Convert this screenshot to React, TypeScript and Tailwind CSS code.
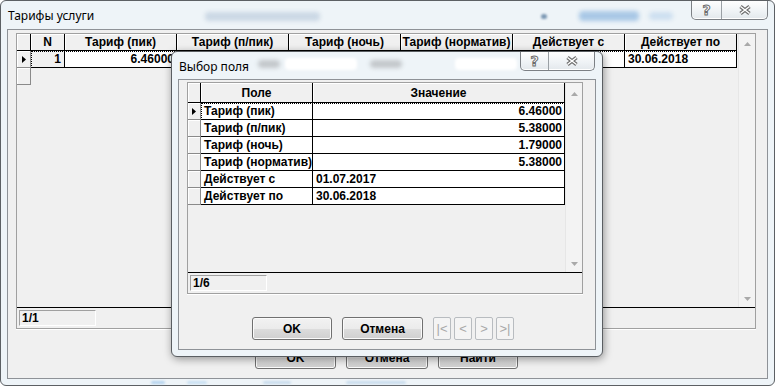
import React from "react";

const FONT = "font-['Liberation_Sans',Arial,sans-serif]";
const TFONT = "font-['Noto_Sans','Open_Sans',sans-serif]";

function Tri() {
  return (
    <svg width="4" height="7" viewBox="0 0 4 7">
      <polygon points="0,0 4,3.5 0,7" fill="#000" />
    </svg>
  );
}

function ArrowUp() {
  return (
    <svg width="7" height="4" viewBox="0 0 7 4">
      <polygon points="0,4 3.5,0 7,4" fill="#a9a9a9" />
    </svg>
  );
}

function ArrowDown() {
  return (
    <svg width="7" height="4" viewBox="0 0 7 4">
      <polygon points="0,0 7,0 3.5,4" fill="#a9a9a9" />
    </svg>
  );
}

function CaptionButtons({ qw, xw, h }: { qw: string; xw: string; h: string }) {
  return (
    <div className="flex self-start overflow-hidden rounded-b-[5px] border border-t-0 border-[#7c8085] bg-[linear-gradient(#fefefe,#eef2f5_60%,#e3e8ec)] shadow-[inset_0_-1px_0_#fff]">
      <div className={`flex items-center justify-center border-r border-[#9aa0a5] ${qw} ${h}`}>
        <span className="font-['DejaVu_Sans',sans-serif] text-[14px] font-bold leading-none text-white [-webkit-text-stroke:1px_#6d6d6d]">
          ?
        </span>
      </div>
      <div className={`flex items-center justify-center ${xw} ${h}`}>
        <svg width="14" height="10" viewBox="0 0 14 10">
          <path d="M2.5 1.5 L11.5 8.5 M11.5 1.5 L2.5 8.5" stroke="#6d6d6d" strokeWidth="3.6" fill="none" />
          <path d="M2.5 1.5 L11.5 8.5 M11.5 1.5 L2.5 8.5" stroke="#ffffff" strokeWidth="1.5" fill="none" />
        </svg>
      </div>
    </div>
  );
}

function WinButton({ children, w }: { children: React.ReactNode; w: string }) {
  return (
    <div
      className={`flex h-[23px] items-center justify-center rounded-[3px] border border-[#707070] bg-[linear-gradient(#f2f2f2_0%,#ebebeb_50%,#dddddd_51%,#cfcfcf_100%)] shadow-[inset_0_0_0_1px_#fbfbfb] text-[12px] font-bold text-black ${w}`}
    >
      {children}
    </div>
  );
}

function NavButton({ children }: { children: React.ReactNode }) {
  return (
    <div className="flex h-[23px] w-[18px] items-center justify-center rounded-[2px] border border-[#b8bcc0] bg-[#f4f4f4] text-[13px] text-[#a8a8a8]">
      {children}
    </div>
  );
}

function HeadCell({ w, children }: { w: string; children?: React.ReactNode }) {
  return (
    <div
      className={`flex h-full shrink-0 items-center justify-center border-b border-r border-black bg-[#f0f0f0] shadow-[inset_1px_1px_0_#fff] text-[12px] font-bold text-black whitespace-nowrap overflow-hidden ${w}`}
    >
      {children}
    </div>
  );
}

function IndCell({ children }: { children?: React.ReactNode }) {
  return (
    <div className="flex h-full w-full items-center justify-center border-b border-r border-[#8a8a8a] bg-[#f0f0f0] shadow-[inset_1px_1px_0_#fff]">
      {children}
    </div>
  );
}

const mainCols = [
  { t: "Тариф (пик)", v: "6.46000", r: true },
  { t: "Тариф (п/пик)", v: "5.38000", r: true },
  { t: "Тариф (ночь)", v: "1.79000", r: true },
  { t: "Тариф (норматив)", v: "5.38000", r: true },
  { t: "Действует с", v: "01.07.2017", r: false },
  { t: "Действует по", v: "30.06.2018", r: false },
];

const dlgRows = [
  { f: "Тариф (пик)", v: "6.46000", r: true },
  { f: "Тариф (п/пик)", v: "5.38000", r: true },
  { f: "Тариф (ночь)", v: "1.79000", r: true },
  { f: "Тариф (норматив)", v: "5.38000", r: true },
  { f: "Действует с", v: "01.07.2017", r: false },
  { f: "Действует по", v: "30.06.2018", r: false },
];

function MainGrid() {
  return (
    <div className="ml-[8px] mt-[3px] flex h-[296px] w-[740px] flex-col border border-[#a0a0a0] bg-[#f0f0f0] shadow-[0_1px_0_#fff]">
      <div className="flex min-h-0 flex-1">
        <div className="flex w-[721px] flex-col">
          <div className="flex h-[17px]">
            <HeadCell w="w-[14px]" />
            <HeadCell w="w-[34px]">N</HeadCell>
            {mainCols.map((c) => (
              <HeadCell key={c.t} w="w-[112px]">
                {c.t}
              </HeadCell>
            ))}
          </div>
          <div className="flex h-[17px]">
            <div className="h-full w-[14px] shrink-0">
              <IndCell>
                <Tri />
              </IndCell>
            </div>
            <div className="relative flex h-full">
              <div className="flex h-full w-[34px] items-center justify-end border-b border-r border-black bg-[#f0f0f0] pr-[3px] text-[12px] font-bold">
                1
              </div>
              {mainCols.map((c) => (
                <div
                  key={c.t}
                  className={`flex h-full w-[112px] items-center border-b border-r border-black bg-white text-[12px] font-bold ${c.r ? "justify-end pr-[2px]" : "justify-start pl-[3px]"}`}
                >
                  {c.v}
                </div>
              ))}
              <div className="pointer-events-none absolute inset-0 border border-dotted border-black" />
            </div>
          </div>
          <div className="h-[17px] w-[14px]">
            <IndCell />
          </div>
        </div>
        <div className="flex flex-1 flex-col items-center justify-between border-l border-[#e6e6e6] bg-[#f3f3f3] pb-[6px] pt-[8px]">
          <ArrowUp />
          <ArrowDown />
        </div>
      </div>
      <div className="flex h-[21px] items-start border-t border-black pl-[2px] pt-[2px]">
        <div className="flex h-[16px] w-[77px] items-center border border-b-white border-l-[#a0a0a0] border-r-white border-t-[#a0a0a0] pl-[2px] text-[12px] font-bold">
          1/1
        </div>
      </div>
    </div>
  );
}

function DialogGrid() {
  return (
    <div className="ml-[8px] mt-[2px] flex h-[212px] w-[396px] flex-col border border-[#a0a0a0] bg-[#f0f0f0] shadow-[0_1px_0_#fff]">
      <div className="flex min-h-0 flex-1">
        <div className="flex w-[377px] flex-col">
          <div className="flex h-[20px]">
            <HeadCell w="w-[13px]" />
            <HeadCell w="w-[112px]">Поле</HeadCell>
            <HeadCell w="w-[252px]">Значение</HeadCell>
          </div>
          {dlgRows.map((r, i) => (
            <div key={r.f} className="flex h-[17px]">
              <div className="h-full w-[13px] shrink-0">
                <IndCell>{i === 0 ? <Tri /> : null}</IndCell>
              </div>
              <div className="relative flex h-full">
                <div className="flex h-full w-[112px] items-center border-b border-r border-black bg-white pl-[3px] text-[12px] font-bold whitespace-nowrap overflow-hidden">
                  {r.f}
                </div>
                <div
                  className={`flex h-full w-[252px] items-center border-b border-r border-black bg-white text-[12px] font-bold ${r.r ? "justify-end pr-[2px]" : "justify-start pl-[3px]"}`}
                >
                  {r.v}
                </div>
                {i === 0 ? <div className="pointer-events-none absolute inset-0 border border-dotted border-black" /> : null}
              </div>
            </div>
          ))}
        </div>
        <div className="flex flex-1 flex-col items-center justify-between border-l border-[#e6e6e6] bg-[#f3f3f3] pb-[6px] pt-[9px]">
          <ArrowUp />
          <ArrowDown />
        </div>
      </div>
      <div className="flex h-[21px] items-start border-t border-black pl-[2px] pt-[2px]">
        <div className="flex h-[16px] w-[77px] items-center border border-b-white border-l-[#a0a0a0] border-r-white border-t-[#a0a0a0] pl-[2px] text-[12px] font-bold">
          1/6
        </div>
      </div>
    </div>
  );
}

function Dialog() {
  return (
    <div className="absolute left-[171px] top-[51px] flex h-[306px] w-[432px] flex-col rounded-[6px] border border-[#5a5e62] bg-[#eef4f8] shadow-[1px_2px_8px_rgba(0,0,0,0.4)]">
      <div className="relative flex h-[27px] items-center justify-between">
        <div className="pointer-events-none absolute left-[86px] top-[8px] h-[8px] w-[22px] rounded bg-[#c3c7cb] blur-[2px]" />
        <div className="pointer-events-none absolute left-[113px] top-[6px] h-[12px] w-[72px] rounded bg-white blur-[1.5px]" />
        <div className="pointer-events-none absolute left-[198px] top-[8px] h-[8px] w-[32px] rounded bg-[#c3c7cb] blur-[2px]" />
        <div className="pointer-events-none absolute left-[283px] top-[6px] h-[12px] w-[62px] rounded bg-white blur-[1.5px]" />
        <span className={`relative pl-[7px] pt-[2px] text-[12px] text-black ${TFONT}`}>Выбор поля</span>
        <div className="relative mr-[7px] self-start">
          <CaptionButtons qw="w-[28px]" xw="w-[45px]" h="h-[18px]" />
        </div>
      </div>
      <div className="mx-[6px] mb-[6px] flex flex-1 flex-col border border-[#8e9297] bg-[#f0f0f0]">
        <DialogGrid />
        <div className="ml-[73px] mt-[23px] flex items-center">
          <WinButton w="w-[80px]">OK</WinButton>
          <div className="w-[10px]" />
          <WinButton w="w-[81px]">Отмена</WinButton>
          <div className="w-[10px]" />
          <div className="flex gap-[3px]">
            <NavButton>|&lt;</NavButton>
            <NavButton>&lt;</NavButton>
            <NavButton>&gt;</NavButton>
            <NavButton>&gt;|</NavButton>
          </div>
        </div>
      </div>
    </div>
  );
}

export default function App() {
  return (
    <div className={`relative h-[386px] w-[775px] overflow-hidden bg-white ${FONT}`}>
      <div className="flex h-full w-full flex-col rounded-[6px] border border-[#5c6064] bg-[#eef4f8]">
        <div className="relative flex h-[28px] items-center justify-between">
          <div className="pointer-events-none absolute left-[204px] top-[11px] h-[9px] w-[115px] rounded bg-[#cbd8e5] blur-[2px]" />
          <div className="pointer-events-none absolute left-[540px] top-[13px] h-[5px] w-[6px] rounded-full bg-[#7b97b3] blur-[1px]" />
          <div className="pointer-events-none absolute left-[578px] top-[10px] h-[10px] w-[60px] rounded bg-[#a9c8e6] blur-[2px]" />
          <div className="pointer-events-none absolute left-[648px] top-[11px] h-[8px] w-[24px] rounded bg-[#cddff0] blur-[2px]" />
          <span className={`relative pl-[7px] pt-[2px] text-[12px] text-black ${TFONT}`}>Тарифы услуги</span>
          <div className="relative mr-[6px] self-start">
            <CaptionButtons qw="w-[30px]" xw="w-[45px]" h="h-[18px]" />
          </div>
        </div>
        <div className="mx-[6px] flex h-[350px] flex-col border border-[#8e9297] bg-[#f0f0f0]">
          <MainGrid />
          <div className="ml-[247px] mt-[17px] flex gap-[10px]">
            <WinButton w="w-[81px]">OK</WinButton>
            <WinButton w="w-[82px]">Отмена</WinButton>
            <WinButton w="w-[80px]">Найти</WinButton>
          </div>
        </div>
        <div className="relative flex-1">
          <div className="pointer-events-none absolute left-[150px] top-[2px] h-[3px] w-[14px] rounded bg-[#b5d4ee] blur-[1px]" />
          <div className="pointer-events-none absolute left-[186px] top-[2px] h-[3px] w-[20px] rounded bg-[#c9e0f2] blur-[1px]" />
          <div className="pointer-events-none absolute left-[262px] top-[2px] h-[3px] w-[28px] rounded bg-[#c9dcec] blur-[1px]" />
          <div className="pointer-events-none absolute left-[345px] top-[2px] h-[3px] w-[60px] rounded bg-[#c9dcec] blur-[1px]" />
        </div>
      </div>
      <Dialog />
    </div>
  );
}
